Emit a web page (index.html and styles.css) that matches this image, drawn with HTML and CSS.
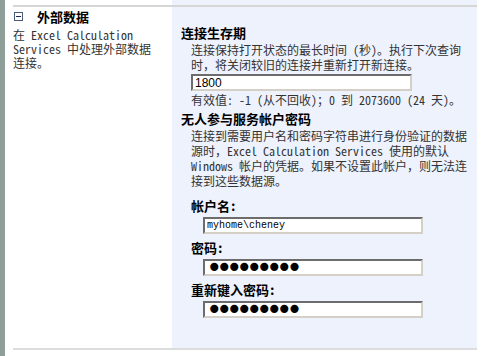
FILE: index.html
```html
<!DOCTYPE html>
<html>
<head>
	<title>外部数据</title>

	<link rel="stylesheet" href="styles.css">

</head>
<body>

	<div class="page">
		<div class="strip"></div>
		<div class="main">
			<div class="section">
				<div class="side">
					<div class="side-head">
						<svg class="toggle" width="9" height="9" viewBox="0 0 9 9">
							<rect x="0.5" y="0.5" width="8" height="8" fill="#fff" stroke="#4a5a78"/>
							<rect x="2" y="4" width="5" height="1" fill="#1c2c50"/>
						</svg>
						<span class="side-title">外部数据</span>
					</div>
					<p class="side-desc">在 Excel Calculation Services 中处理外部数据连接。</p>
				</div>

				<div class="panel">
					<h3>连接生存期</h3>
					<div class="group">
						<p>连接保持打开状态的最长时间 (秒)。执行下次查询时，将关闭较旧的连接并重新打开新连接。</p>
						<input type="text" class="field" id="lifetime" value="1800">
						<p>有效值: -1 (从不回收)；0 到 2073600 (24 天)。</p>
					</div>

					<h3 class="second">无人参与服务帐户密码</h3>
					<div class="group">
						<p>连接到需要用户名和密码字符串进行身份验证的数据源时，Excel Calculation Services 使用的默认 Windows 帐户的凭据。如果不设置此帐户，则无法连接到这些数据源。</p>

						<div class="account">
							<label for="account">帐户名:</label>
							<input type="text" class="field wide" id="account" value="myhome\cheney">
							<label for="password">密码:</label>
							<input type="password" class="field wide secret" id="password" value="123456789">
							<label for="confirm">重新键入密码:</label>
							<input type="password" class="field wide secret" id="confirm" value="123456789">
						</div>
					</div>
				</div>
			</div>
		</div>
	</div>

</body>
</html>
```

FILE: styles.css
```css
html, body {
	margin: 0;
	background: #fff;
}
body {
	font-family: "Noto Sans Mono CJK SC", "Noto Sans CJK SC", monospace;
	font-size: 12px;
	color: #333;
}

.page {
	display: flex;
	height: 356px;
}
.strip {
	width: 5px;
	background: #8e9e99;
}
.main {
	margin-left: 8px;
	width: 464px;
	height: 343px;
	padding-top: 5px;
	background: linear-gradient(to right, #fff 159px, #eef2fd 159px);
	border-bottom: 2px solid #dcdcdc;
}

.section {
	display: grid;
	grid-template-columns: 159px 1fr;
	height: 100%;
	border-top: 2px solid #d6d6d6;
	box-sizing: border-box;
}

.side-head {
	display: flex;
	align-items: center;
	height: 18px;
}
.toggle {
	margin-left: 1px;
	margin-right: 14px;
}
.side-title {
	font-size: 13px;
	font-weight: bold;
	color: #000;
}
.side-desc {
	margin: 3px 0 0;
	width: 146px;
	line-height: 14px;
}

.panel {
	background: #eef2fd;
	padding: 18px 0 0 9px;
}
.panel h3 {
	margin: 0;
	font-size: 13px;
	line-height: 16px;
	color: #000;
}
.panel h3.second {
	margin-top: 4px;
}
.group {
	padding-left: 10px;
	width: 279px;
}
.group p {
	margin: 1px 0 0;
	line-height: 15px;
}

.field {
	display: block;
	box-sizing: border-box;
	width: 221px;
	height: 17px;
	margin: 2px 0 0;
	padding: 0 2px;
	border: 2px solid;
	border-color: #6c6c6c #d4d0c8 #d4d0c8 #6c6c6c;
	background: #fff;
	font-family: "Liberation Sans", sans-serif;
	font-size: 12px;
	color: #000;
	outline: none;
}

.account {
	margin-top: 10px;
}
.account label {
	display: block;
	font-size: 13px;
	font-weight: bold;
	line-height: 16px;
	color: #000;
}
.field.wide {
	width: 220px;
	margin: 3px 0 6px 12px;
	font-family: "Liberation Mono", monospace;
	font-size: 10px;
}
.field.secret {
	font-family: "DejaVu Sans", sans-serif;
	font-size: 28px;
	letter-spacing: -6.5px;
	padding: 0 0 0 1px;
}
```
